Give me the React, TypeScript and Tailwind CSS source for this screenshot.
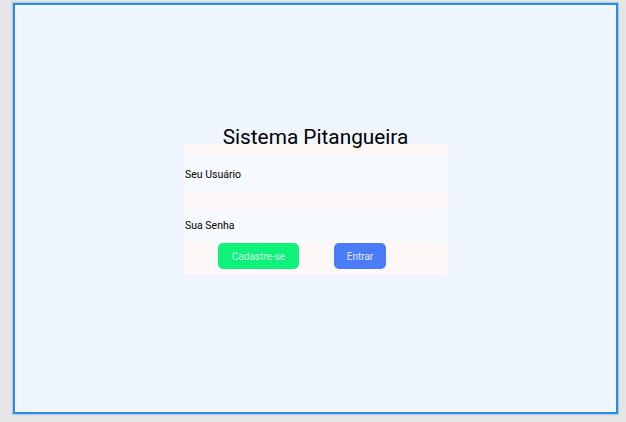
import React from "react";

export default function App() {
  return (
    <div className="w-[626px] h-[422px] bg-[#e6e6e6] pt-[3px] pl-[13px]" style={{ fontFamily: "Roboto, 'Liberation Sans', sans-serif" }}>
      <div className="w-[605px] h-[411px] border-2 border-[#2b8ddb] bg-[#eff6ff] shadow-[0_0_1px_1px_rgba(120,180,230,0.5)] flex flex-col items-center">
        <div className="mt-[122px] h-[17px] leading-[20px] text-[20.8px] text-black relative z-10 whitespace-nowrap">Sistema Pitangueira</div>
        <div className="w-[263px] bg-[#f7faff] flex flex-col">
          <div className="h-[11px] bg-[#fff8f8]" />
          <div className="h-[38px] flex items-center pl-[1px] pt-[2px] text-[10.5px] text-black">Seu Usuário</div>
          <div className="h-[16px] bg-[#fff8f8]" />
          <div className="h-[33px] flex items-center pl-[1px] pt-[1px] text-[10.5px] text-black">Sua Senha</div>
          <div className="h-[32px] bg-[#fff8f8] flex items-start pt-[1px]">
            <button className="ml-[34px] w-[81px] h-[26px] rounded-[5px] bg-[#0ef27c] text-[10px] text-[#c6ffe0]">Cadastre-se</button>
            <button className="ml-[35px] w-[52px] h-[26px] rounded-[5px] bg-[#4b7bf7] text-[10px] text-[#e4ecff]">Entrar</button>
          </div>
        </div>
      </div>
    </div>
  );
}
